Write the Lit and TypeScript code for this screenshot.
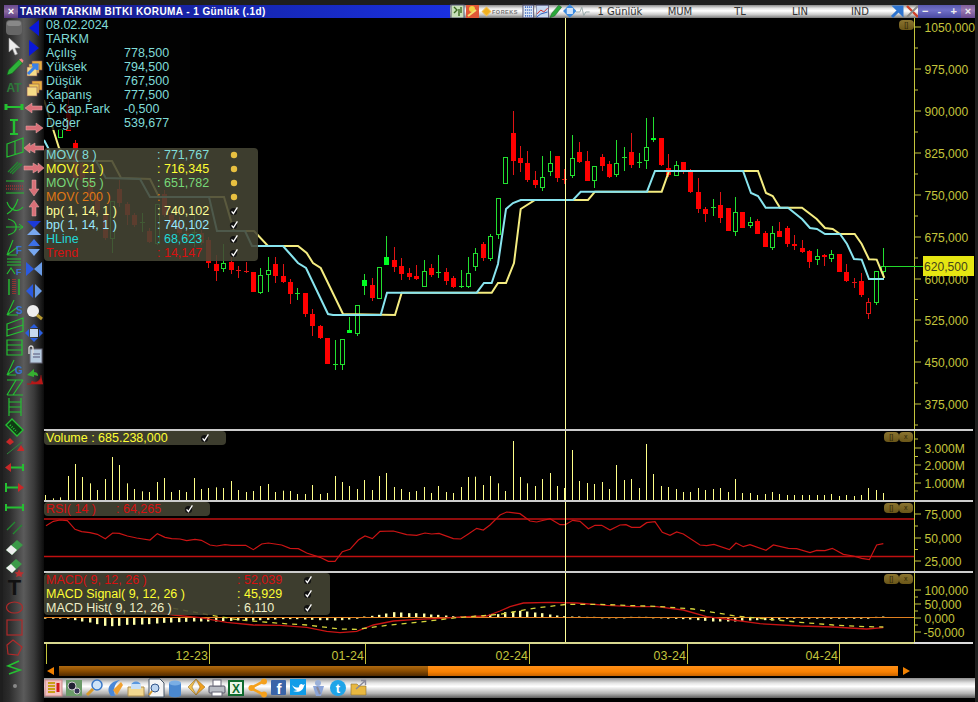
import { LitElement, html, css, svg } from "lit";
import { customElement } from "lit/decorators.js";

// candle: index, high, low, body top, body bottom, kind. y values are 3x, measured from y=100
type Candle = [number, number, number, number, number, string];
const CANDLES: Candle[] = [
  [2, 87, 111, 88, 110, "g"], [3, -45, 93, 15, 93, "r"], [4, 120, 235, 130, 235, "r"], [5, 180, 250, 190, 240, "r"],
  [6, 230, 300, 240, 290, "r"], [7, 280, 340, 290, 330, "r"], [8, 330, 420, 340, 415, "r"], [9, 302, 460, 302, 415, "g"],
  [10, 240, 320, 268, 310, "r"], [11, 305, 375, 312, 345, "r"], [12, 340, 380, 345, 375, "r"], [13, 340, 395, 365, 368, "g"],
  [14, 385, 430, 392, 425, "r"], [15, 312, 435, 312, 430, "g"], [16, 270, 350, 283, 345, "r"], [17, 340, 385, 345, 375, "r"],
  [18, 350, 405, 370, 400, "r"], [19, 390, 425, 400, 420, "r"], [20, 345, 440, 395, 398, "g"], [21, 390, 435, 400, 430, "r"],
  [22, 410, 505, 420, 490, "r"], [23, 465, 542, 492, 513, "r"], [24, 432, 515, 488, 505, "g"], [25, 450, 522, 487, 510, "r"],
  [26, 497, 533, 510, 513, "r"], [27, 487, 520, 514, 517, "r"], [28, 516, 575, 516, 575, "r"], [29, 505, 581, 525, 576, "g"],
  [30, 472, 576, 511, 523, "g"], [31, 472, 548, 492, 527, "r"], [32, 492, 548, 528, 545, "r"], [33, 537, 611, 546, 581, "r"],
  [34, 565, 600, 578, 581, "g"], [35, 579, 650, 579, 641, "r"], [36, 628, 708, 642, 677, "r"], [37, 675, 718, 677, 714, "r"],
  [38, 714, 791, 714, 791, "r"], [39, 720, 809, 793, 796, "g"], [40, 718, 809, 718, 791, "g"], [41, 650, 698, 691, 698, "G"],
  [42, 616, 707, 616, 698, "g"], [43, 522, 585, 541, 559, "G"], [44, 535, 603, 556, 595, "r"], [45, 502, 596, 502, 593, "g"],
  [46, 408, 494, 472, 494, "G"], [47, 441, 515, 480, 501, "r"], [48, 473, 540, 498, 522, "r"], [49, 505, 540, 518, 531, "r"],
  [50, 495, 540, 529, 537, "r"], [51, 480, 557, 514, 557, "g"], [52, 492, 530, 504, 525, "r"], [53, 465, 535, 516, 520, "G"],
  [54, 505, 555, 516, 543, "r"], [55, 528, 563, 534, 561, "r"], [56, 510, 563, 559, 561, "g"], [57, 472, 563, 520, 557, "g"],
  [58, 445, 512, 460, 497, "g"], [59, 425, 482, 432, 474, "r"], [60, 403, 482, 409, 473, "g"], [61, 295, 418, 295, 401, "g"],
  [62, 172, 248, 172, 248, "g"], [63, 33, 225, 98, 182, "r"], [64, 138, 215, 174, 188, "r"], [65, 153, 245, 190, 240, "r"],
  [66, 213, 263, 240, 255, "r"], [67, 168, 272, 230, 260, "g"], [68, 153, 228, 190, 212, "g"], [69, 168, 245, 168, 234, "r"],
  [70, 207, 252, 236, 238, "r"], [71, 105, 233, 175, 225, "g"], [72, 126, 190, 157, 186, "r"], [73, 153, 243, 183, 243, "r"],
  [74, 197, 264, 199, 239, "g"], [75, 163, 212, 171, 198, "r"], [76, 183, 234, 192, 232, "r"], [77, 121, 230, 190, 221, "g"],
  [78, 141, 213, 170, 173, "g"], [79, 99, 204, 156, 195, "r"], [80, 160, 204, 187, 190, "g"], [81, 54, 207, 142, 181, "g"],
  [82, 51, 127, 115, 120, "G"], [83, 114, 197, 114, 195, "r"], [84, 163, 232, 204, 225, "r"], [85, 183, 228, 196, 225, "g"],
  [86, 187, 223, 187, 217, "r"], [87, 208, 278, 214, 276, "r"], [88, 234, 338, 276, 327, "r"], [89, 322, 366, 327, 342, "r"],
  [90, 297, 348, 322, 325, "g"], [91, 277, 369, 315, 355, "r"], [92, 325, 392, 325, 392, "r"], [93, 292, 408, 337, 392, "g"],
  [94, 337, 384, 337, 384, "r"], [95, 351, 384, 367, 374, "g"], [96, 357, 402, 363, 402, "r"], [97, 394, 441, 399, 441, "r"],
  [98, 379, 450, 400, 441, "g"], [99, 366, 411, 393, 411, "r"], [100, 379, 441, 384, 432, "r"], [101, 405, 450, 432, 438, "r"],
  [102, 420, 459, 444, 456, "r"], [103, 449, 504, 453, 486, "r"], [104, 447, 495, 469, 476, "g"], [105, 463, 498, 466, 472, "r"],
  [106, 450, 487, 463, 473, "g"], [107, 462, 516, 462, 516, "r"], [108, 492, 546, 516, 543, "r"], [109, 534, 564, 547, 550, "r"],
  [110, 519, 591, 543, 585, "r"], [111, 595, 657, 606, 640, "h"], [112, 514, 615, 514, 606, "g"], [113, 445, 540, 499, 513, "g"],
];

const VOLUME = [
  15, 5, 8, 72, 108, 69, 50, 30, 63, 129, 105, 50, 33, 26, 24, 54, 66, 24, 30, 24, 66, 33, 36, 38, 36, 57, 30, 24, 27, 42, 48, 24, 28, 27, 18, 18, 45, 18,
  21, 72, 54, 42, 33, 60, 30, 72, 81, 39, 33, 24, 27, 39, 21, 42, 24, 21, 39, 69, 70, 45, 72, 50, 27, 177, 69, 50, 42, 63, 81, 42, 36, 150, 57, 51, 48, 54,
  33, 105, 60, 63, 36, 168, 78, 42, 39, 33, 24, 24, 36, 30, 33, 36, 24, 63, 21, 21, 15, 18, 24, 18, 15, 15, 15, 15, 15, 15, 18, 12, 15, 12, 15, 36, 30, 21,
];

const HIST = [
  -2, -2, -2, -2, -8, -12, -15, -20, -25, -26, -25, -22, -22, -21, -20, -18, -16, -15, -14, -13, -12, -12, -12, -12, -11, -10, -9, -9, -9, -8, -7, -6, -5, -5,
  -5, -6, -7, -8, -8, -9, -8, -6, -2, 3, 5, 8, 12, 16, 15, 13, 13, 12, 9, 8, 6, 4, 3, 4, 5, 7, 9, 10, 16, 18, 20, 18, 15, 13, 9, 6, 4, 3, 3, 2, 2, 1, 1, 1, 1, 2,
  2, 2, 1, 1, -3, -4, -5, -6, -8, -10, -12, -12, -12, -12, -10, -9, -8, -8, -9, -6, -4, -3, -3, -3, -2, -2, -2, -2, -2, -2, -2, -2, 2, 3,
];

const barX = (i: number) => Math.round(45.3 + i * 7.416);

const YELLOW = [[44, 100], [59, 148], [70, 161], [112, 161], [121, 178], [150, 179], [159, 197], [224, 197], [234, 231], [254, 231], [268, 246], [298, 246], [306.7, 253], [313, 263], [320.7, 268], [343, 314], [395, 315], [401.7, 292.7], [491.7, 292.7], [498, 283], [506, 283], [514, 263], [520.7, 209], [535, 200], [588, 200], [595, 191.7], [661.7, 191.7], [669, 171], [758, 171], [766, 193], [772.7, 196], [780, 207.7], [802, 207.7], [816.7, 219], [825, 228], [832.7, 229], [840, 234], [854.7, 234], [861.7, 244], [869, 259.3], [876.7, 259.6], [884.3, 278]];
const CYAN = [[44, 140], [55, 161], [96, 161], [105.7, 178], [140, 179], [150, 197], [209, 197], [217, 231], [245, 231], [252, 246], [283, 246], [291, 255], [298, 263], [306, 268], [328, 314], [333, 315], [380.7, 315], [387, 292.7], [476.7, 292.7], [484, 283], [491.7, 283], [498, 264], [506, 209], [513, 203], [520.7, 200], [573, 200], [580.7, 191.7], [647, 191.7], [655, 171], [743, 171], [751, 193], [758, 196], [765.7, 207.7], [788, 207.7], [802, 219], [810, 228], [817, 229], [825, 234], [840, 234], [847, 244], [854, 259], [861.7, 259.6], [869, 279], [884, 279]];

const z7 = (a: number[][]) => a.map(([x, y]) => [40 + x / 3, 425 + y / 3]);
const z8 = (a: number[][]) => a.map(([x, y]) => [500 + x / 3, 425 + y / 3]);
const pts = (a: number[][]) => a.map((p) => p.join(",")).join(" ");

const RSI = [
  ...z7([[18, 302], [40, 289], [60, 285], [82, 287], [105, 313], [125, 320], [150, 323], [172, 328], [196, 341], [218, 324], [238, 325], [262, 333], [290, 339], [330, 345], [352, 326], [375, 337], [395, 341], [420, 342], [440, 347], [465, 343], [484, 346], [510, 360], [530, 363], [555, 359], [575, 361], [617, 361], [640, 374], [665, 357], [685, 354], [725, 360], [750, 370], [775, 371], [800, 384], [840, 397], [865, 409], [885, 409], [907, 380], [930, 373], [955, 345], [975, 333], [997, 341], [1020, 319], [1060, 318], [1100, 329], [1130, 331], [1155, 324], [1175, 327], [1197, 325], [1240, 341], [1262, 342], [1285, 327], [1310, 310], [1330, 315], [1350, 300], [1380, 270]]),
  ...z8([[20, 261], [60, 266], [90, 288], [110, 291], [150, 281], [180, 299], [196, 299], [218, 286], [240, 289], [265, 311], [285, 301], [305, 301], [330, 315], [360, 300], [378, 299], [395, 307], [420, 307], [440, 293], [465, 290], [487, 322], [510, 331], [530, 321], [550, 327], [600, 360], [620, 362], [642, 358], [688, 374], [708, 354], [730, 365], [750, 359], [798, 376], [820, 360], [865, 370], [890, 371], [930, 383], [950, 376], [975, 377], [997, 370], [1030, 388], [1060, 393], [1085, 400], [1108, 404], [1130, 360], [1150, 356]]),
];
const MACD = [
  ...z7([[300, 555], [400, 570], [480, 578], [560, 592], [640, 600], [720, 601], [800, 607], [860, 619], [900, 623], [950, 619], [1000, 600], [1060, 588], [1130, 583], [1200, 580], [1280, 575], [1340, 573], [1380, 558]]),
  ...z8([[30, 545], [70, 534], [150, 532], [230, 534], [320, 541], [400, 545], [470, 545], [550, 555], [620, 575], [700, 585], [780, 596], [900, 603], [1000, 606], [1100, 612], [1150, 608]]),
];
const SIGNAL = [
  ...z7([[400, 550], [520, 572], [600, 585], [720, 595], [800, 600], [900, 612], [950, 613], [1050, 600], [1150, 590], [1250, 578], [1380, 568]]),
  ...z8([[100, 550], [200, 538], [300, 538], [400, 542], [470, 544], [580, 552], [700, 572], [800, 582], [900, 592], [1000, 600], [1100, 605], [1150, 606]]),
];

const GR = "#25c032";
const PK = "#d87078";
const BL = "#2a5ee0";
const folder = (arrow: boolean) => svg`
  <rect x="8" y="3" width="10" height="9" fill="#e8b040" stroke="#855" stroke-width=".6"/>
  <rect x="5" y="6" width="10" height="9" fill="#f0c858" stroke="#855" stroke-width=".6"/>
  <rect x="3" y="9" width="10" height="9" fill="#f6dc88" stroke="#855" stroke-width=".6"/>
  ${arrow ? svg`<path d="M4 16 L12 8 M8 7h5v5" fill="none" stroke="#3a80e8" stroke-width="3"/>` : ""}`;
const pinkArrow = (d: string) => svg`<path d=${d} fill=${PK} stroke="#e8a8a8" stroke-width=".5"/>`;

const TOOLS1 = [
  svg`<rect x="2" y="3" width="16" height="15" rx="4" fill="#666"/><rect x="3" y="4" width="14" height="5" rx="2.5" fill="#888"/>`,
  svg`<path d="M5 1 L5 15 L8.5 12 L11 18 L13.5 17 L11 11 L16 11 Z" fill="#eee" stroke="#999" stroke-width=".6"/>`,
  svg`<path d="M3 18 L4.5 13 L15 2.5 L18.5 6 L8 16.5 Z" fill="#2eb43a" stroke="#0c5a14" stroke-width=".6"/><path d="M15 2.5 L18.5 6 L19.5 3.5 L17.5 1.5 Z" fill="#e88"/>`,
  svg`<text x="10" y="15" text-anchor="middle" font-size="12" font-weight="700" fill="#2e7a3a">AT</text>`,
  svg`<path d="M2 7v6M18 7v6" stroke=${GR} stroke-width="3"/><path d="M2 10h16" stroke=${GR} stroke-width="2"/>`,
  svg`<path d="M6 3h8M6 17h8" stroke=${GR} stroke-width="2"/><path d="M10 3v14" stroke=${GR} stroke-width="2.4"/>`,
  svg`<path d="M3 7 L19 1 V15 L3 20 Z M11 4 V18" fill="none" stroke=${GR} stroke-width="1.2"/>`,
  svg`<path d="M4 15 L14 5 M8 17 L18 7 M6 16 L16 6" stroke="#228a30" stroke-width="1.2"/>`,
  svg`<path d="M2 4h18M2 16h18" stroke=${GR}/><path d="M2 9h18M2 12h18" stroke="#c83030" stroke-dasharray="1 1" stroke-width="1.2"/>`,
  svg`<path d="M3 5 C6 14 14 16 19 10 M3 17 C8 14 12 9 14 2" fill="none" stroke=${GR} stroke-width="1.1"/>`,
  svg`<path d="M4 2 C14 4 16 15 4 18 M2 10 H19" fill="none" stroke=${GR} stroke-width="1.2"/><path d="M15 7 L19 10 L15 13" fill="none" stroke=${GR}/>`,
  svg`<path d="M3 18 L9 3 M3 18 L15 9 M3 18 H13" fill="none" stroke=${GR} stroke-width="1.1"/><text x="12" y="17" font-size="10" font-weight="700" fill="#3a70d0">F</text>`,
  svg`<path d="M3 17 L7 11 L11 17" fill="none" stroke=${GR} stroke-width="1.2"/><path d="M3 2h14M3 5h14M3 8h14" stroke=${GR}/><text x="12" y="18" font-size="9" font-weight="700" fill="#3a70d0">F</text>`,
  svg`<path d="M5 2v16" stroke=${GR} stroke-width="1.4"/><path d="M9 2v16M11 2v16" stroke="#c83030" stroke-dasharray="1 1" stroke-width="1.2"/><path d="M15 2v16" stroke=${GR} stroke-width="1.4"/>`,
  svg`<path d="M3 18 L10 3 M3 18 L14 10 M3 18 H14" fill="none" stroke=${GR} stroke-width="1.1"/><text x="12" y="17" font-size="10" font-weight="700" fill="#3a70d0">S</text>`,
  svg`<path d="M3 7 L19 1 V14 L3 19 Z M3 13 L19 8" fill="none" stroke=${GR} stroke-width="1.2"/>`,
  svg`<path d="M3 3h15v15h-15z M3 8h15 M3 13h15" fill="none" stroke=${GR} stroke-width="1.2"/>`,
  svg`<path d="M3 18 L10 3 M3 18 L14 10 M3 18 H12" fill="none" stroke=${GR} stroke-width="1.1"/><text x="11" y="17" font-size="10" font-weight="700" fill="#3a70d0">G</text>`,
  svg`<path d="M3 3H19 M3 18H19 M3 18 L12 3 M9 18 L19 3" fill="none" stroke=${GR} stroke-width="1.2"/>`,
  svg`<path d="M5 1V19 M17 1V19 M5 5H17 M5 10H17 M5 15H17" fill="none" stroke=${GR} stroke-width="1.2"/>`,
  svg`<path d="M2 8 L8 2 L19 13 L13 19 Z" fill="#0f3a14" stroke=${GR} stroke-width="1.4"/><path d="M6 8 L13 15" stroke=${GR} stroke-dasharray="1 1.4" stroke-width="2"/>`,
  svg`<path d="M3 17 L18 5" stroke="#2a8a3a"/><path d="M6 1 L10 5 L6 8 L2 5 Z" fill="#c82828"/><path d="M17 8 L21 14 H13 Z" fill="#c82828"/>`,
  svg`<path d="M19 7v7" stroke=${GR} stroke-width="2"/><path d="M6 10.5h13" stroke=${GR} stroke-width="2"/><path d="M7 6v9L1 10.5Z" fill="#c82828"/>`,
  svg`<path d="M2 6v9" stroke=${GR} stroke-width="2"/><path d="M2 10.5h13" stroke=${GR} stroke-width="2"/><path d="M14 6v9l6-4.5Z" fill="#c82828"/>`,
  svg`<path d="M2 7v7M19 7v7" stroke=${GR} stroke-width="2"/><path d="M2 10.5h17" stroke=${GR} stroke-width="2"/>`,
  svg`<path d="M3 13 L11 5 M9 17 L18 8" stroke="#228a30" stroke-width="1.3"/>`,
  svg`<path d="M2 13 L13 3 L19 8 L8 18 Z" fill="#3b9a48"/><path d="M2 13 L7 8 L13 13 L8 18 Z" fill="#eee"/>`,
  svg`<path d="M2 11 L12 2 L18 7 L8 16 Z" fill="#3b9a48"/><path d="M2 11 L7 7 L12 12 L8 16 Z" fill="#eee"/><path d="M15 12 L16.5 15 L20 15.5 L17.5 18 L18 20 L15 19 L12 20 L12.8 17.5 L10.5 15.5 L13.8 15 Z" fill="#b83030"/>`,
  svg`<text x="10.5" y="18" text-anchor="middle" font-size="22" font-weight="700" font-family="Liberation Serif" fill="#111">T</text>`,
  svg`<ellipse cx="10.5" cy="10.5" rx="8" ry="5.5" fill="none" stroke="#b02a2a" stroke-width="1.2"/>`,
  svg`<rect x="3" y="3" width="15" height="15" fill="none" stroke="#b02a2a" stroke-width="1.2"/>`,
  svg`<path d="M9 3 L18 10 L14 18 L4 17 L3 8 Z" fill="none" stroke="#b02a2a" stroke-width="1.2"/>`,
  svg`<path d="M15 4 L4 9 L16 13 L5 17" fill="none" stroke=${GR} stroke-width="1.6"/>`,
  svg`<circle cx="11" cy="9" r="2" fill="#888"/>`,
];

const TOOLS2 = [
  svg`<path d="M15 2 V18 L5 10 Z" fill="#0a18d8"/>`,
  svg`<path d="M5 2 V18 L15 10 Z" fill="#0a18d8"/>`,
  folder(true),
  folder(false),
  pinkArrow("M1 10 L8 5 V8 H18 V12 H8 V15 Z"),
  pinkArrow("M19 10 L12 5 V8 H2 V12 H12 V15 Z"),
  pinkArrow("M0 10 L6 5 V8 L11 5 V8 H20 V12 H11 V15 L6 12 V15 Z"),
  pinkArrow("M20 10 L14 5 V8 L9 5 V8 H0 V12 H9 V15 L14 12 V15 Z"),
  pinkArrow("M10 18 L5 11 H8 V2 H12 V11 H15 Z"),
  pinkArrow("M10 2 L5 9 H8 V18 H12 V9 H15 Z"),
  svg`<path d="M3 3H17L10 10Z" fill="#1c3ad8"/><path d="M10 10L17 17H3Z" fill="#78a8f0"/>`,
  svg`<path d="M10 1L16 8H4Z" fill="#3c70e8"/><path d="M4 11H16L10 18Z" fill="#78a8f0"/>`,
  svg`<path d="M2 3V17L10 10Z" fill="#2a5ae0"/><path d="M18 3V17L10 10Z" fill="#6a9ce8"/>`,
  svg`<path d="M2 10L9 3V17Z" fill="#2a5ae0"/><path d="M18 10L11 3V17Z" fill="#6a9ce8"/>`,
  svg`<circle cx="9" cy="9" r="6" fill="#eee"/><path d="M13 13L18 17" stroke="#b89a30" stroke-width="3"/>`,
  svg`<path d="M10 1L14 5H6Z M10 19L6 15H14Z M1 10L5 6V14Z M19 10L15 14V6Z" fill=${BL}/><rect x="6" y="6" width="8" height="8" fill="#c8d8f0"/>`,
  svg`<rect x="6" y="5" width="12" height="14" fill="#b8cce0" stroke="#667"/><path d="M5 10V4a2 2 0 0 1 4 0V12" fill="none" stroke="#ddd" stroke-width="1.3"/><path d="M9 10h7M9 13h7" stroke="#557"/>`,
  svg`<path d="M3 9 L10 3 L10 6 C14 6 14 9 14 10 L10 9 L10 11 Z" fill="#35b030"/><path d="M17 9 C17 15 12 18 8 15 L7 18 L3 18 H19" fill="#b81818" stroke="#b81818" stroke-width=".6"/>`,
];

const BOTTOM = [
  svg`<rect x="1" y="2" width="17" height="16" fill="#f3c0c0" stroke="#c88"/><path d="M4 5h7M4 8h7M4 11h7M4 14h7" stroke="#c8a018" stroke-width="2"/><path d="M14 5v9" stroke="#d01818" stroke-width="3"/>`,
  svg`<rect x="1" y="2" width="16" height="16" fill="#6a9a68"/><circle cx="7" cy="8" r="4" fill="#223" stroke="#ccc"/><circle cx="12" cy="13" r="3" fill="#335" stroke="#ccc"/>`,
  svg`<circle cx="12" cy="7" r="5" fill="#cfe4f8" stroke="#3a78c8" stroke-width="1.5"/><path d="M8 11 L2 17" stroke="#d89a2a" stroke-width="3"/>`,
  svg`<path d="M6 18 C0 10 6 3 15 2 C9 6 8 12 10 18 Z" fill="#4a88d8"/><path d="M12 17 L8 12 L16 4 L18 7 Z" fill="#f0a030"/>`,
  svg`<path d="M2 9 H18 V18 H2 Z" fill="#f2d890" stroke="#b09050"/><path d="M5 8 C5 2 15 2 15 8 Z" fill="#5a98e0"/><rect x="5" y="6" width="10" height="5" fill="#c8e0f8"/>`,
  svg`<path d="M3 1H14L18 5V19H3Z" fill="#f4f4f4" stroke="#456"/><circle cx="9" cy="10" r="4" fill="#bcd4f0" stroke="#358"/><path d="M6 13L3 17" stroke="#d89a2a" stroke-width="2"/>`,
  svg`<path d="M3 5 V17 C3 20 15 20 15 17 V5 Z" fill="#4a88d0"/><ellipse cx="9" cy="5" rx="6" ry="2.5" fill="#7aaee4"/>`,
  svg`<path d="M9 1 L18 9 L9 17 L13 9 Z" fill="#f0a020" stroke="#8a6010" stroke-width=".5"/><path d="M9 1 L1 9 L9 17 L5 9 Z" fill="#f0c050" stroke="#8a6010" stroke-width=".5"/>`,
  svg`<rect x="2" y="8" width="16" height="7" rx="1" fill="#b8bcc4" stroke="#556"/><rect x="6" y="2" width="8" height="6" fill="#fff" stroke="#667"/><rect x="5" y="14" width="10" height="4" fill="#fff" stroke="#667"/>`,
  svg`<rect x="1" y="2" width="16" height="16" fill="#0e6a2e"/><rect x="3" y="4" width="12" height="12" fill="#e8f4e8"/><text x="9" y="15" text-anchor="middle" font-size="12" font-weight="700" fill="#0e6a2e">X</text>`,
  svg`<path d="M16 3 L3 10 L16 17" fill="none" stroke="#f4a01c" stroke-width="2.6"/><circle cx="3.5" cy="10" r="3" fill="#f4a01c"/><circle cx="16" cy="3.5" r="3" fill="#f4a01c"/><circle cx="16" cy="16.5" r="3" fill="#f4a01c"/>`,
  svg`<rect x="3" y="2" width="15" height="15" rx="1" fill="#3a64a8"/><text x="11" y="16" text-anchor="middle" font-size="15" font-weight="700" fill="#fff">f</text>`,
  svg`<rect x="2" y="1" width="16" height="16" fill="#109ce8"/><path d="M4 7 C7 10 10 10 11 9 C11 6 14 5 15 7 L17 6 L16 8 C15 13 10 15 5 13 C8 13 9 12 9 12 C7 12 5 9 4 7 Z" fill="#fff"/>`,
  svg`<circle cx="9" cy="5" r="3" fill="#9ab0d8"/><path d="M4 8 L15 8 L12 18 L7 18 Z" fill="#8aa4d8"/><path d="M8 9 L11 16" stroke="#889" stroke-width="2"/>`,
  svg`<circle cx="9" cy="10" r="8" fill="#1fa4e8"/><text x="9" y="15" text-anchor="middle" font-size="13" font-weight="700" fill="#fff">t</text>`,
  svg`<path d="M2 6 H8 L10 8 H17 V17 H2 Z" fill="#e8b840" stroke="#8a7030" stroke-width=".6"/><path d="M7 11 L16 3 M12 2.5 H16.5 V7" fill="none" stroke="#889" stroke-width="1.4"/>`,
];

const TOP_LEFT = [
  svg`<rect x="1" y="1" width="13" height="13" fill="#c8e0b8" stroke="#557"/><path d="M4 3l3 3-3 3M9 5v7M11 3v6" stroke="#3a6a20" stroke-width="1.4" fill="none"/>`,
  svg`<rect x="1" y="1" width="13" height="13" fill="#e05838"/><circle cx="7" cy="5" r="3" fill="#f0d040"/><path d="M3 12 L11 6" stroke="#f4e070" stroke-width="2"/>`,
];
const TOP_RIGHT = [
  svg`<rect x="1" y="1" width="11" height="13" fill="#dfe8f4" stroke="#557"/><path d="M3 3h7M3 6h7M3 9h7M3 12h7" stroke="#3060c0" stroke-dasharray="1 1" stroke-width="1.6"/>`,
  svg`<rect x="0" y="1" width="13" height="13" fill="#c8d8f0" stroke="#557"/><path d="M1 10 L5 6 L8 8 L12 4" stroke="#d03030" fill="none"/><path d="M1 13 L5 10 L12 8" stroke="#3060c0" fill="none"/>`,
  svg`<path d="M1 14 L3 9 L10 1 L13 3 L6 12 Z" fill="#2aa83a" stroke="#105a18" stroke-width=".5"/>`,
  svg`<path d="M7 0L11 4H3Z M7 14L3 10H11Z M0 7L4 3V11Z M14 7L10 11V3Z" fill="#3a8ae0"/><rect x="4" y="4" width="6" height="6" fill="#cfe2f8"/>`,
  svg`<path d="M0 8H4L6 3L8 12L10 8H14" fill="none" stroke="#9aa" stroke-width="1"/>`,
];
const CLOSE_TOOLS = [
  svg`<path d="M2 13 L9 6 M5 3h7v7Z" stroke="#2e74d0" stroke-width="3" fill="#2e74d0"/>`,
  svg`<path d="M2 2 L13 13" stroke="#d04028" stroke-width="2.4"/><path d="M13 2 L2 13" stroke="#888" stroke-width="2"/>`,
];

const axisLabel = (y: number, t: string, x = 924.5) => svg`<text class="ax" x=${x} y=${y + 4.5}>${t}</text>`;
const tick = (y: number, len: number) => svg`<path d="M914 ${y}h${len}" stroke="#c4c43c"/>`;
const scale = (labels: [number, string][], minor: number[]) => svg`
  ${labels.map(([y, t]) => svg`${tick(y, 7)}${axisLabel(y, t)}`)}
  ${minor.map((y) => tick(y, 4))}`;

const check = html`<svg class="mark" viewBox="0 0 10 10"><circle cx="4.5" cy="5.5" r="3.6" fill="#111"/><path d="M2.6 5.4 L4.4 7.6 L8.4 1.4" fill="none" stroke="#fff" stroke-width="1.3"/></svg>`;
const dot = html`<svg class="mark" viewBox="0 0 10 10"><circle cx="5" cy="5" r="3.2" fill="#e8c040"/></svg>`;

@customElement("app-root")
export class AppRoot extends LitElement {
  static styles = css`
    :host {
      display: block;
      width: 978px;
      height: 702px;
      background: #1e1e1e;
      overflow: hidden;
      font-family: "Liberation Sans", Arial, sans-serif;
      box-sizing: border-box;
    }
    svg { display: block; }
    .window { display: flex; flex-direction: column; height: 702px; padding-top: 5px; box-sizing: border-box; }
    .titlebar { display: flex; height: 13px; flex: none; padding-left: 4px; }
    .close {
      width: 14px; background: linear-gradient(#6a4a90, #8a6aa0 50%, #5a3a80);
      color: #fff; font: 700 11px/13px "Liberation Sans", sans-serif; text-align: center;
    }
    .title {
      width: 432px; background: linear-gradient(90deg, #1a1a80, #1628b8 60%, #1a30e0);
      color: #fff; font: 700 10px/13px "Liberation Sans", sans-serif; letter-spacing: .42px; padding-left: 2px;
      box-sizing: border-box; white-space: nowrap; overflow: hidden;
    }
    .toolbar {
      display: flex; align-items: center; width: 468px;
      background: linear-gradient(#8a8a8a, #e4e4e4 25%, #fff 45%, #c8c8c8 75%, #777);
    }
    .toolbar svg { flex: none; height: 15px; }
    .ti { width: 15px; }
    .tr { width: 13.6px; }
    .foreks { display: flex; align-items: center; gap: 2px; width: 42px; padding-left: 3px; box-sizing: border-box; flex: none; }
    .foreks i { width: 7px; height: 7px; background: #f0b020; transform: rotate(45deg); border: 1px solid #fff3; box-sizing: border-box; flex: none; }
    .foreks span { font: 700 5.5px "Liberation Sans", sans-serif; color: #777; letter-spacing: .5px; }
    .menu { width: 60px; text-align: center; font: 10px "DejaVu Sans", sans-serif; color: #333; flex: none; }
    .winbtns { display: flex; width: 57px; }
    .winbtns span {
      flex: 1; text-align: center; color: #eee; font: 700 11px/12px "Liberation Sans", sans-serif;
      background: linear-gradient(#5a5ab0, #7070c8 40%, #4a4aa0);
    }
    .winbtns span:last-child { background: linear-gradient(#80609a, #9a78b0 40%, #6a4a90); }

    .body { display: flex; flex: 1; min-height: 0; padding-left: 3px; padding-right: 3px; }
    .col1, .col2 { display: flex; flex-direction: column; flex: none; height: 100%; }
    .col1 { width: 21px; background: linear-gradient(90deg, #222, #2c2c2c 30%, #5c5c5c); }
    .col1 .list { margin: -1px 0 0 1px; }
    .col2 { width: 20px; background: linear-gradient(90deg, #5a5a5a, #3a3a3a 50%, #0c0c0c); }
    .icon { width: 20px; height: 20px; flex: none; }
    .col2 .icon.loose { height: 21.3px; }
    .col2 .icon svg, .col1 .icon svg { width: 20px; height: 20px; overflow: visible; }
    .col1 text, .col2 text, .bottom text { font-family: "Liberation Sans", sans-serif; }

    .main { display: flex; flex-direction: column; width: 931px; background: #000; }
    .pane { position: relative; flex: none; }
    .pane + .pane { border-top: 2px solid #ccc; margin-right: 2px; }
    .pane > svg { width: 929px; }
    .top { height: 411px; }
    .top > svg { height: 411px; width: 931px; }
    .sub { height: 69px; }
    .sub > svg { height: 69px; }
    .ax { font-size: 12.1px; fill: #c4c43c; }
    .time-line { height: 2px; margin-right: 2px; flex: none; background: linear-gradient(90deg, #d8d890 870px, #ddd 870px); }
    .time { height: 21px; flex: none; }
    .tl { font-size: 12.4px; fill: #c4c43c; text-anchor: end; letter-spacing: .15px; }

    .scroll { display: flex; align-items: center; height: 10px; margin: 1px 0 2px; flex: none; padding-left: 3px; }
    .scroll svg { flex: none; width: 8px; height: 10px; }
    .track { display: flex; width: 839px; height: 10px; margin: 0 5px 0 4px; flex: none; }
    .track .off { width: 369px; background: linear-gradient(#b06a10, #8a4c00 50%, #502a00); }
    .track .on { flex: 1; background: linear-gradient(#ff9018, #f88000 60%, #c86400); }
    .bottom {
      display: flex; align-items: center; height: 20px; flex: none;
      background: linear-gradient(#909090, #e4e4e4 25%, #fff 42%, #b0b0b0 78%, #5c5c5c);
    }
    .bottom .icon { width: 20.35px; display: flex; justify-content: center; align-items: center; }

    .info {
      position: absolute; left: 0; top: 0; width: 146px; height: 112px;
      background: rgba(3, 3, 3, .78); color: #80dcd8; font-size: 12.5px; line-height: 14px;
      display: grid; grid-template-columns: 78px 1fr; grid-auto-rows: 14px; padding-left: 2px; box-sizing: border-box;
    }
    .info .wide { grid-column: span 2; }
    .legend {
      position: absolute; left: 0; top: 0; box-sizing: border-box; padding-left: 2px;
      background: rgba(70, 69, 52, .88); border-radius: 4px;
      display: grid; grid-auto-rows: 14px; font-size: 12.5px; line-height: 14px; white-space: nowrap; align-items: center;
    }
    .legend.price { top: 130px; width: 214px; height: 113px; grid-template-columns: 111px 72px 12px; }
    .legend.vol { width: 182px; height: 14px; grid-template-columns: 154px 12px; }
    .legend.rsi { width: 166px; height: 14px; grid-template-columns: 70px 68px 12px; }
    .legend.macd { width: 286px; height: 42px; grid-template-columns: 191px 66px 12px; }
    .mark { width: 10px; height: 10px; }
    .c-cy { color: #80dcd8; } .c-ye { color: #ffff33; } .c-gn { color: #78d878; } .c-or { color: #e07814; }
    .c-py { color: #ffff99; } .c-lb { color: #98e8ff; } .c-tq { color: #22d8d8; } .c-rd { color: #d81010; }
    .c-wh { color: #f0f0c8; }
    .pills { position: absolute; display: flex; }
    .pills span {
      width: 14.5px; height: 9.5px; border-radius: 4px; background: linear-gradient(#8a7430, #6a5618);
      color: #2a2408; font: 7px/9px "Liberation Sans", sans-serif; text-align: center;
    }
    .pills.p-main { top: 2px; left: 855px; }
    .pills.p-sub { top: 1px; left: 840px; }
  `;

  private candles() {
    return CANDLES.map(([i, hi, lo, top, bot, k]) => {
      const x = barX(i);
      const y = (v: number) => Math.round(100 + v / 3);
      const red = k === "r" || k === "h";
      const wick = red ? "#e01414" : "#22e030";
      const h = Math.max(y(bot) - y(top), 1);
      const thin = bot - top <= 4;
      // hollow body: bright outer box with a black core, so edges stay pixel sharp
      const body = k === "g" || k === "h"
        ? svg`<rect x=${x - 2} y=${y(top)} width="5" height=${h + 1} fill=${wick}/><rect x=${x - 1} y=${y(top) + 1} width="3" height=${h - 1} fill="#000"/>`
        : svg`<rect x=${x - 2} y=${y(top)} width="5" height=${h} fill=${k === "G" ? "#00ff22" : "#ff0000"}/>`;
      const cross = svg`<rect x=${x - 2} y=${y(top)} width="5" height="1" fill=${wick}/>`;
      return svg`<rect x=${x} y=${y(hi)} width="1" height=${y(lo) - y(hi)} fill=${wick}/>${thin ? cross : body}`;
    });
  }

  private cross(top: number, h: number) {
    return svg`<path d="M565.5 ${top}v${h}" stroke="#ffff99"/><path d="M914.5 ${top}v${h}" stroke="#c4c43c"/>`;
  }

  private pricePane() {
    const labels: [number, string][] = [
      [27, "1050,000"], [69, "975,000"], [111, "900,000"], [153, "825,000"], [195, "750,000"],
      [237, "675,000"], [279, "600,000"], [320, "525,000"], [362, "450,000"], [404, "375,000"],
    ];
    return svg`
      <svg viewBox="44 18 931 411">
        ${this.candles()}
        <polyline points=${pts(YELLOW)} fill="none" stroke="#f4ec80" stroke-width="2"/>
        <polyline points=${pts(CYAN)} fill="none" stroke="#88e4ee" stroke-width="2"/>
        ${this.cross(18, 411)}
        ${scale(labels, [48, 90, 132, 174, 216, 258, 299.5, 341, 383, 425])}
        <path d="M885 266.5H923" stroke="#22d82a"/>
        <rect x="923" y="256" width="51" height="20" fill="#e6e612"/>
        <text x="924" y="270.5" font-size="12.1" fill="#44441a">620,500</text>
      </svg>`;
  }

  private volumePane() {
    return svg`
      <svg viewBox="44 431 929 69">
        ${VOLUME.map((h, i) => svg`<rect x=${barX(i)} y=${500 - h / 3} width="1" height=${h / 3} fill="#ffff88"/>`)}
        ${this.cross(431, 69)}
        ${scale([[448, "3.000M"], [465, "2.000M"], [483, "1.000M"]], [439, 456.5, 474, 491])}
      </svg>`;
  }

  private rsiPane() {
    return svg`
      <svg viewBox="44 502 929 69">
        <path d="M44 519H914M44 556.5H914" stroke="#c01010" stroke-width="1.4"/>
        <polyline points=${pts(RSI)} fill="none" stroke="#cc1414" stroke-width="1.2"/>
        ${this.cross(502, 69)}
        ${scale([[514, "75,000"], [538, "50,000"], [561, "25,000"]], [526, 549.5])}
      </svg>`;
  }

  private macdPane() {
    return svg`
      <svg viewBox="44 573 929 69">
        ${HIST.map((h, i) => {
          const v = h / 3;
          return svg`<rect x=${barX(i) - 1} y=${v > 0 ? 617.5 - v : 617.5} width="2.4" height=${Math.max(Math.abs(v), 1.2)} fill="#ffffa8"/>`;
        })}
        <path d="M44 617.5H914" stroke="#e08020" stroke-width="1.2"/>
        <polyline points=${pts(MACD)} fill="none" stroke="#c81414" stroke-width="1.3"/>
        <polyline points=${pts(SIGNAL)} fill="none" stroke="#d4d43c" stroke-width="1.3" stroke-dasharray="5 5"/>
        ${this.cross(573, 69)}
        ${scale([[590, "100,000"], [604, "50,000"], [618, "0,000"]], [597, 611, 625])}
        ${tick(632, 7)}${axisLabel(632, "-50,000", 923.5)}
      </svg>`;
  }

  private timeAxis() {
    const marks: [number, string][] = [[209, "12-23"], [365, "01-24"], [529, "02-24"], [687, "03-24"], [839, "04-24"]];
    return svg`
      <svg viewBox="44 644 931 21" width="931" height="21">
        <path d="M46.5 644v20" stroke="#c4c43c"/>
        ${marks.map(([x, t]) => svg`
          <path d="M${x + 0.5} 644v20" stroke="#c4c43c"/>
          <text class="tl" x=${x - 1} y="660">${t}</text>`)}
      </svg>`;
  }

  render() {
    const menus = ["1 Günlük", "MUM", "TL", "LIN", "IND"];
    const info: [string, string][] = [
      ["Açılış", "778,500"], ["Yüksek", "794,500"], ["Düşük", "767,500"], ["Kapanış", "777,500"],
      ["Ö.Kap.Fark", "-0,500"], ["Değer", "539,677"],
    ];
    const legend: [string, string, string, boolean][] = [
      ["MOV( 8 )", "771,767", "c-cy", true], ["MOV( 21 )", "716,345", "c-ye", true],
      ["MOV( 55 )", "651,782", "c-gn", true], ["MOV( 200 )", "", "c-or", true],
      ["bp( 1, 14, 1 )", "740,102", "c-py", false], ["bp( 1, 14, 1 )", "740,102", "c-lb", false],
      ["HLine", "68,623", "c-tq", false], ["Trend", "14,147", "c-rd", false],
    ];
    const macd: [string, string, string][] = [
      ["MACD( 9, 12, 26 )", "52,039", "c-rd"], ["MACD Signal( 9, 12, 26 )", "45,929", "c-ye"], ["MACD Hist( 9, 12, 26 )", "6,110", "c-wh"],
    ];
    return html`
      <div class="window">
        <div class="titlebar">
          <div class="close">×</div>
          <div class="title">TARKM TARKIM BITKI KORUMA - 1 Günlük (.1d)</div>
          <div class="toolbar">
            ${TOP_LEFT.map((s) => html`<svg class="ti" viewBox="0 0 15 15">${s}</svg>`)}
            <div class="foreks"><i></i><span>FOREKS</span></div>
            ${TOP_RIGHT.map((s) => html`<svg class="tr" viewBox="0 0 14 15">${s}</svg>`)}
            ${menus.map((m) => html`<div class="menu">${m}</div>`)}
            ${CLOSE_TOOLS.map((s) => html`<svg class="ti" viewBox="0 0 15 15">${s}</svg>`)}
          </div>
          <div class="winbtns"><span>−</span><span>-</span><span>+</span><span>×</span></div>
        </div>
        <div class="body">
          <div class="col1"><div class="list">
            ${TOOLS1.map((s) => html`<div class="icon"><svg viewBox="0 0 20 20">${s}</svg></div>`)}
          </div></div>
          <div class="col2">
            ${TOOLS2.map((s, i) => html`<div class="icon ${i >= 11 ? "loose" : ""}"><svg viewBox="0 0 20 20">${s}</svg></div>`)}
          </div>
          <div class="main">
            <div class="pane top">
              ${this.pricePane()}
              <div class="info">
                <div class="wide">08.02.2024</div>
                <div class="wide">TARKM</div>
                ${info.map(([k, v]) => html`<div>${k}</div><div>${v}</div>`)}
              </div>
              <div class="legend price">
                ${legend.map(([k, v, c, d]) => html`
                  <div class=${c}>${k}</div><div class=${c}>: ${v}</div>${d ? dot : check}`)}
              </div>
              <div class="pills p-main"><span>[]</span></div>
            </div>
            <div class="pane sub">
              ${this.volumePane()}
              <div class="legend vol"><div class="c-ye">Volume : 685.238,000</div>${check}</div>
              <div class="pills p-sub"><span>[]</span><span>x</span></div>
            </div>
            <div class="pane sub">
              ${this.rsiPane()}
              <div class="legend rsi"><div class="c-rd">RSI( 14 )</div><div class="c-rd">: 64,265</div>${check}</div>
              <div class="pills p-sub"><span>[]</span><span>x</span></div>
            </div>
            <div class="pane sub">
              ${this.macdPane()}
              <div class="legend macd">
                ${macd.map(([k, v, c]) => html`<div class=${c}>${k}</div><div class=${c}>: ${v}</div>${check}`)}
              </div>
              <div class="pills p-sub"><span>[]</span><span>x</span></div>
            </div>
            <div class="time-line"></div>
            <div class="time">${this.timeAxis()}</div>
            <div class="scroll">
              <svg viewBox="0 0 8 10"><path d="M7 1V9L0 5Z" fill="#f08000"/></svg>
              <div class="track"><div class="off"></div><div class="on"></div></div>
              <svg viewBox="0 0 8 10"><path d="M0 1V9L7 5Z" fill="#f08000"/></svg>
            </div>
            <div class="bottom">
              ${BOTTOM.map((s) => html`<div class="icon"><svg viewBox="0 0 20 20" width="20" height="20">${s}</svg></div>`)}
            </div>
          </div>
        </div>
      </div>
    `;
  }
}
